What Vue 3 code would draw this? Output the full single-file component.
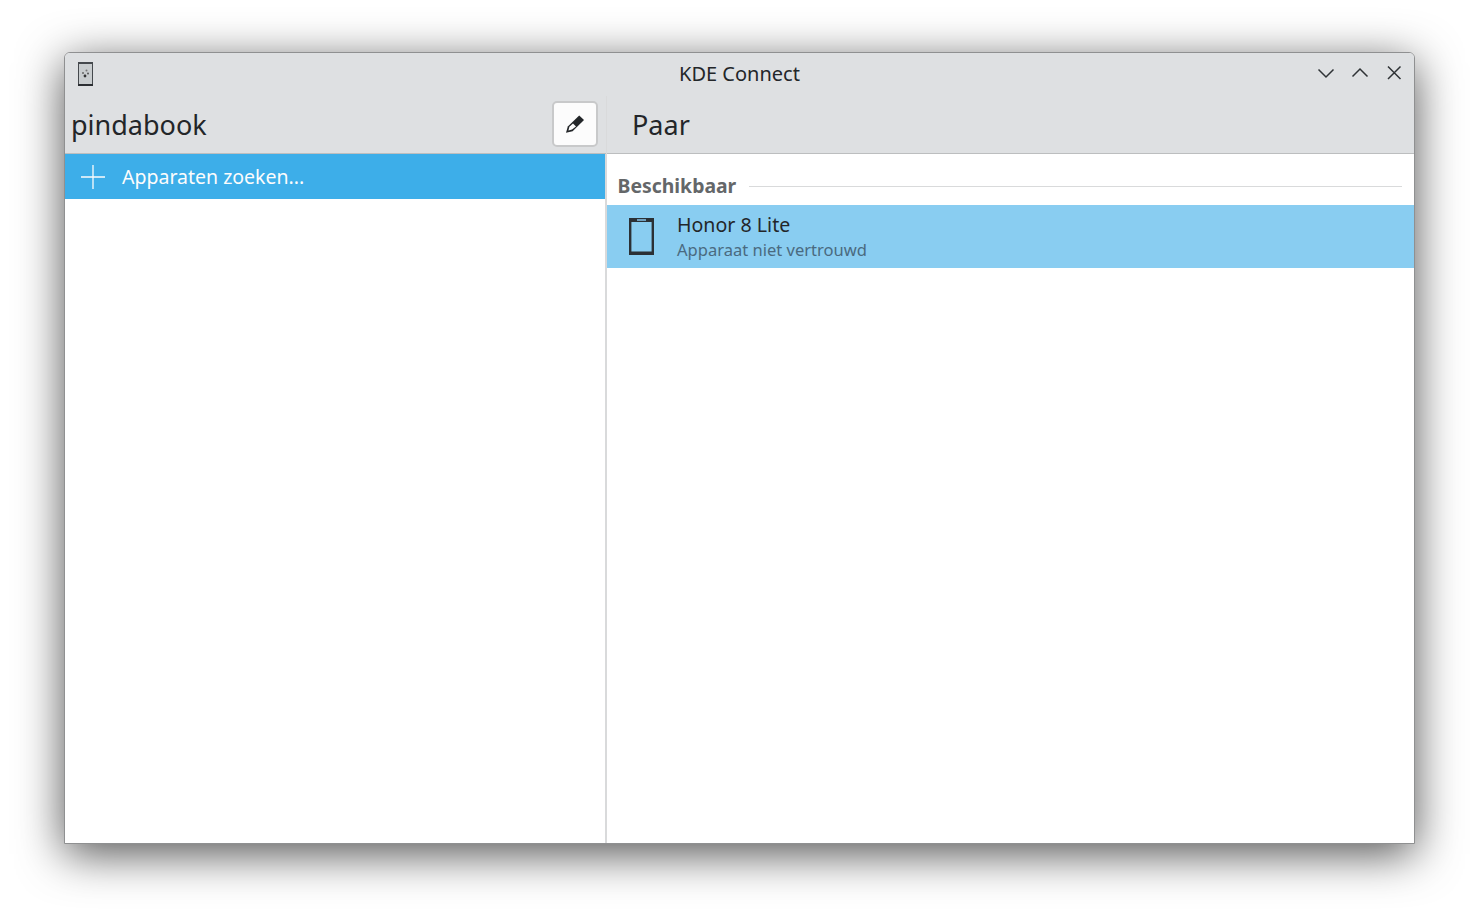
<template>
  <div class="page">
    <div class="window">
      <div class="titlebar">
        <svg class="app-icon" width="15" height="24" viewBox="0 0 15 24">
          <rect x="0" y="0" width="15" height="24" fill="#45494d" />
          <rect x="1" y="2" width="13" height="20" fill="#c9cdcf" />
          <rect x="0" y="22" width="15" height="2" fill="#2c2f33" />
          <circle cx="5" cy="11" r="1" fill="#666" />
          <circle cx="8.5" cy="8.5" r="1" fill="#777" />
          <circle cx="10" cy="11.5" r="1" fill="#555" />
          <circle cx="7" cy="14" r="1.4" fill="#333" />
        </svg>
        <div class="title">KDE Connect</div>
        <div class="controls">
          <svg width="18" height="18" viewBox="0 0 18 18"><path d="M1.5 5.5 9 13l7.5-7.5" /></svg>
          <svg width="18" height="18" viewBox="0 0 18 18"><path d="M1.5 12.5 9 5l7.5 7.5" /></svg>
          <svg width="18" height="18" viewBox="0 0 18 18"><path d="M3 2.5l12.5 12.5M15.5 2.5 3 15" /></svg>
        </div>
      </div>
      <div class="panes">
        <div class="left">
          <div class="head left-head">
            <h1 class="device-name">{{ deviceName }}</h1>
            <button class="edit">
              <svg width="20" height="20" viewBox="0 0 20 20">
                <path d="M14.2 1.4 19 6 7.6 17.2 1 18.8 2.8 12.4z" fill="#232629" />
                <path d="M4.4 12.8 8 9.4 11 12.4 7 15.6 3.4 16.6z" fill="#fcfcfc" />
              </svg>
            </button>
          </div>
          <div class="find">
            <svg width="24" height="24" viewBox="0 0 24 24"><path d="M0 12h24M12 0v24" /></svg>
            <span>Apparaten zoeken...</span>
          </div>
        </div>
        <div class="right">
          <div class="head right-head">
            <h1 class="page-title">Paar</h1>
          </div>
          <div class="section">
            <span class="section-label">Beschikbaar</span>
            <span class="section-line"></span>
          </div>
          <div v-for="d in devices" :key="d.name" class="device">
            <svg class="device-icon" width="25" height="37" viewBox="0 0 25 37">
              <rect x="1.2" y="1" width="22.6" height="35" fill="none" stroke="#2b3035" stroke-width="2.4" />
              <rect x="0" y="0" width="25" height="4" fill="#2b3035" />
              <rect x="8" y="1" width="9" height="2" fill="#6f9fbd" />
              <rect x="0" y="33.5" width="25" height="3.5" fill="#2b3035" />
            </svg>
            <div class="device-text">
              <div class="device-name-row">{{ d.name }}</div>
              <div class="device-status">{{ d.status }}</div>
            </div>
          </div>
        </div>
      </div>
    </div>
  </div>
</template>

<script setup>
const deviceName = 'pindabook'
const devices = [{ name: 'Honor 8 Lite', status: 'Apparaat niet vertrouwd' }]
</script>

<style>
html, body {
  background: #fff;
  overflow: hidden;
}
</style>

<style scoped>
.page {
  width: 1479px;
  height: 920px;
  padding: 52px 0 0 64px;
  box-sizing: border-box;
  font-family: "Noto Sans", sans-serif;
  color: #232629;
}
.window {
  width: 1351px;
  height: 792px;
  box-sizing: border-box;
  border: 1px solid #8f9091;
  border-radius: 6px 6px 0 0;
  background: #fff;
  box-shadow: 0 10px 46px rgba(0, 0, 0, 0.68);
  display: flex;
  flex-direction: column;
  overflow: hidden;
}
.titlebar {
  height: 43px;
  background: #dee0e2;
  display: grid;
  grid-template-columns: 1fr auto 1fr;
  align-items: center;
  padding: 0 11px 3px 13px;
  box-sizing: border-box;
  flex-shrink: 0;
}
.app-icon {
  margin-top: 2px;
}
.title {
  font-size: 20px;
  margin-left: -2px;
}
.controls {
  display: flex;
  gap: 16px;
  justify-content: flex-end;
}
.controls svg {
  fill: none;
  stroke: #2f3336;
  stroke-width: 1.5;
}
.panes {
  flex: 1;
  display: flex;
  min-height: 0;
}
.left {
  width: 540px;
  border-right: 2px solid #d9dadb;
  flex-shrink: 0;
}
.right {
  flex: 1;
}
.head {
  height: 58px;
  box-sizing: border-box;
  background: #dee0e2;
  border-bottom: 1px solid #bcbebf;
  display: flex;
  align-items: center;
}
.left-head {
  margin-right: -1px;
  padding: 0 8px 0 6px;
  justify-content: space-between;
}
.right-head {
  padding-left: 25px;
}
h1 {
  margin: 0;
  font-size: 27px;
  font-weight: 400;
}
.edit {
  width: 46px;
  height: 46px;
  margin-top: -2px;
  border: 2px solid #c8c9ca;
  border-radius: 5px;
  background: #fcfcfc;
  display: flex;
  align-items: center;
  justify-content: center;
  padding: 0;
}
.find {
  height: 45px;
  background: #3daee9;
  color: #fcfcfc;
  display: flex;
  align-items: center;
  gap: 17px;
  padding-left: 16px;
  font-size: 19.5px;
}
.find svg {
  fill: none;
  stroke: #fcfcfc;
  stroke-width: 1.3;
}
.section {
  display: flex;
  align-items: center;
  gap: 13px;
  height: 51px;
  padding: 12px 12px 0 10.5px;
  box-sizing: border-box;
}
.section-label {
  font-size: 19.4px;
  font-weight: 700;
  color: #646769;
}
.section-line {
  flex: 1;
  height: 1px;
  margin-top: 1px;
  background: #d9dadb;
}
.device {
  height: 63px;
  background: #89cdf1;
  display: flex;
  align-items: center;
  gap: 23px;
  padding-left: 22px;
}
.device-icon {
  flex-shrink: 0;
}
.device-text {
  margin-top: -2px;
}
.device-name-row {
  font-size: 19.6px;
  line-height: 27px;
}
.device-status {
  font-size: 16.55px;
  line-height: 23px;
  color: #4a6a80;
}
</style>
